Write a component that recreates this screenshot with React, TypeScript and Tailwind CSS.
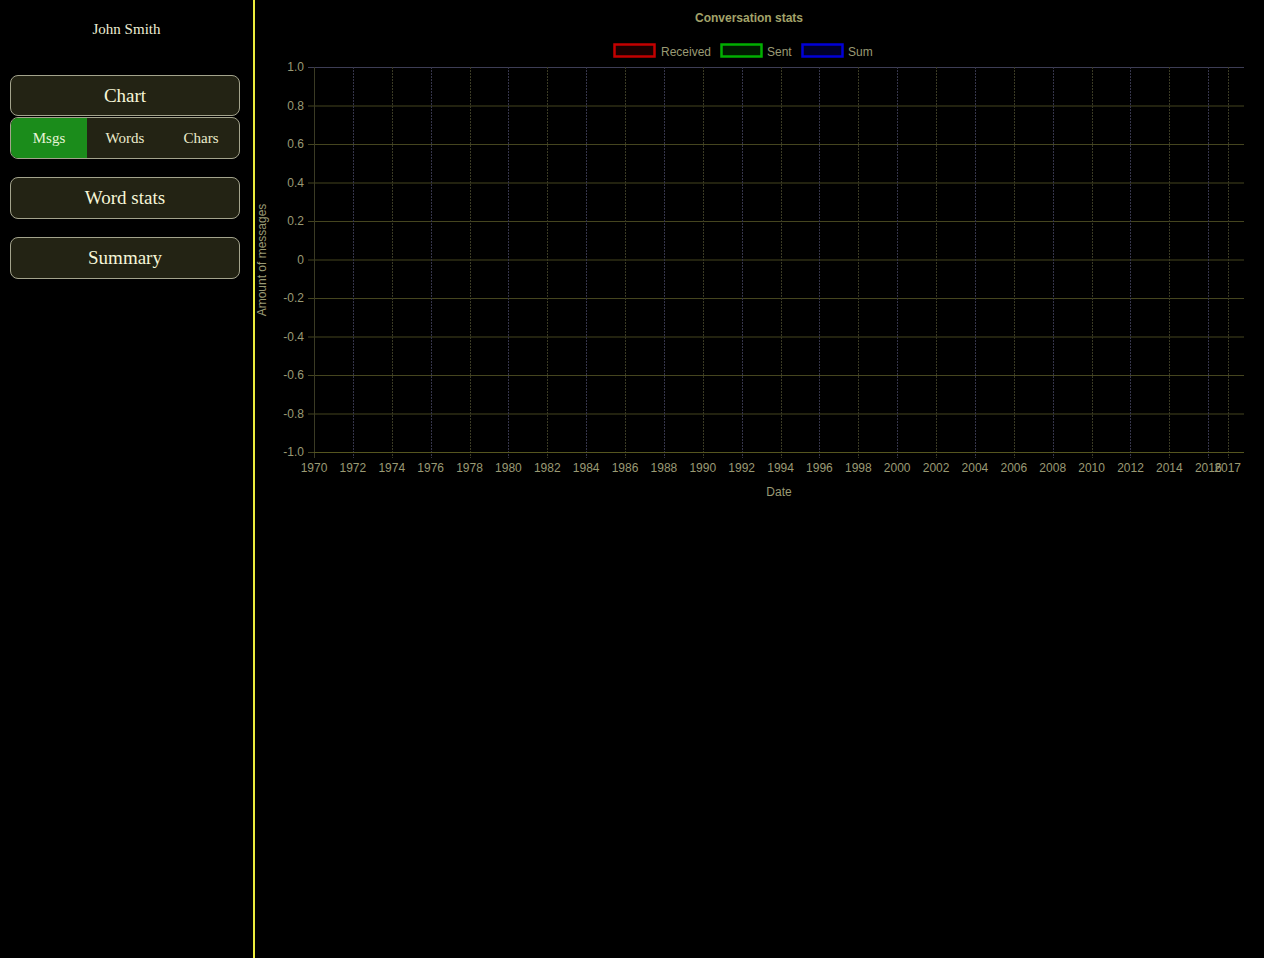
import React from 'react';

const OX = 255;
const LEFT = 314;
const RIGHT = 1244;
const TOP = 67;
const BOTTOM = 452;

const yTicks = [1, 0.8, 0.6, 0.4, 0.2, 0, -0.2, -0.4, -0.6, -0.8, -1];
const years = [
  1970, 1972, 1974, 1976, 1978, 1980, 1982, 1984, 1986, 1988, 1990, 1992, 1994, 1996, 1998, 2000, 2002,
  2004, 2006, 2008, 2010, 2012, 2014, 2016, 2017,
];

const yPos = (v: number) => TOP + ((1 - v) / 2) * (BOTTOM - TOP);
const xPos = (year: number) => LEFT + (year - 1970) * 19.44;

const fmt = (v: number) => (v === 0 ? '0' : v.toFixed(1));

function StatsChart() {
  const label = '#9a9a74';
  return (
    <svg width={1000} height={520} className="block" style={{ fontFamily: '"Liberation Sans", Arial, sans-serif' }}>
      <g transform={`translate(${-OX},0)`}>
        <text x={749} y={22} textAnchor="middle" fontSize={12} fontWeight="bold" fill="#a3a36a">
          Conversation stats
        </text>

        {/* legend */}
        <rect x={614.5} y={44.5} width={40} height={12} fill="#1a0000" stroke="#c40000" strokeWidth={2.5} />
        <text x={661} y={56} fontSize={12} fill={label}>Received</text>
        <rect x={721.5} y={44.5} width={40} height={12} fill="#001a00" stroke="#00b000" strokeWidth={2.5} />
        <text x={767} y={56} fontSize={12} fill={label}>Sent</text>
        <rect x={802.5} y={44.5} width={40} height={12} fill="#00002a" stroke="#0000d8" strokeWidth={2.5} />
        <text x={848} y={56} fontSize={12} fill={label}>Sum</text>

        {/* horizontal grid */}
        {yTicks.map((v) => (
          <g key={v}>
            <line x1={308} x2={RIGHT} y1={yPos(v) + 0.5} y2={yPos(v) + 0.5} stroke={v === 1 ? '#3d3d55' : '#45451f'} />
            <text x={304} y={yPos(v) + 4} textAnchor="end" fontSize={12} fill={label}>
              {fmt(v)}
            </text>
          </g>
        ))}

        {/* vertical grid */}
        {years.map((yr, i) => (
          <g key={yr}>
            <line
              x1={Math.round(xPos(yr)) + 0.5}
              x2={Math.round(xPos(yr)) + 0.5}
              y1={TOP}
              y2={BOTTOM + 6}
              stroke={i % 2 === 0 ? '#3a3a24' : '#35354a'}
              strokeDasharray={i === 0 ? undefined : '2 1'}
            />
            <text x={xPos(yr)} y={472} textAnchor="middle" fontSize={12} fill={label}>
              {yr}
            </text>
          </g>
        ))}

        <line x1={LEFT} x2={RIGHT} y1={BOTTOM + 0.5} y2={BOTTOM + 0.5} stroke="#55551f" />

        <text x={779} y={496} textAnchor="middle" fontSize={12} fill={label}>
          Date
        </text>
        <text
          x={0}
          y={0}
          transform="translate(266,260) rotate(-90)"
          textAnchor="middle"
          fontSize={12}
          fill={label}
        >
          Amount of messages
        </text>
      </g>
    </svg>
  );
}

export default function App() {
  const serif = { fontFamily: '"Liberation Serif", "Times New Roman", serif' };
  const btn =
    'w-[230px] ml-[10px] rounded-lg border border-[#a3a38c] bg-[#232314] text-[#f6f6d8] flex items-center justify-center text-[19px]';

  return (
    <div className="flex min-h-[958px] w-full bg-black">
      {/* Sidebar */}
      <aside className="w-[255px] shrink-0 border-r-2 border-[#eded3c]" style={serif}>
        <div className="pt-[20px] text-center text-[15px] leading-[18px] text-[#eeeed4]">John Smith</div>

        <div className={`${btn} mt-[37px] h-[41px] pt-[2px]`}>Chart</div>
        <div className="w-[230px] ml-[10px] mt-[1px] h-[42px] rounded-lg border border-[#a3a38c] bg-[#232314] overflow-hidden grid grid-cols-3 text-[15px] text-[#ececcc]">
          <div className="bg-[#1b8c1b] flex items-center justify-center text-[#e8f5d8]">Msgs</div>
          <div className="flex items-center justify-center">Words</div>
          <div className="flex items-center justify-center">Chars</div>
        </div>

        <div className={`${btn} mt-[18px] h-[42px]`}>Word stats</div>
        <div className={`${btn} mt-[18px] h-[42px]`}>Summary</div>
      </aside>

      {/* Main */}
      <main className="flex-1 overflow-hidden">
        <StatsChart />
      </main>
    </div>
  );
}
